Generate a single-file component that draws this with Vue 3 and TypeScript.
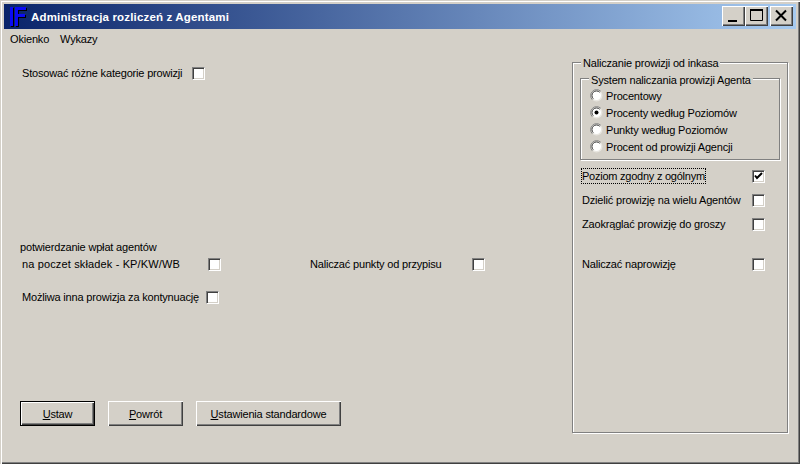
<script setup lang="ts">
const radios = [
  { label: 'Procentowy', on: false },
  { label: 'Procenty według Poziomów', on: true },
  { label: 'Punkty według Poziomów', on: false },
  { label: 'Procent od prowizji Agencji', on: false },
]
</script>

<template>
  <div class="window">
    <header class="titlebar">
      <svg class="logo" width="20" height="24" viewBox="0 0 20 24">
        <path d="M3 2h3v19H3zM8 2h11v3h-8v4h7v3h-7v9H8z" fill="#000" transform="translate(1 1)" />
        <path d="M3 2h3v19H3zM8 2h11v3h-8v4h7v3h-7v9H8z" fill="#0a0af5" />
      </svg>
      <span class="title">Administracja rozliczeń z Agentami</span>
      <div class="controls">
        <button class="ctl"><svg width="23" height="20"><rect x="6" y="14" width="9" height="2" fill="#000" /></svg></button>
        <button class="ctl"><svg width="23" height="20"><path d="M5.500 3.500h12v11h-12z" fill="none" stroke="#000" /><rect x="5" y="3" width="13" height="2" fill="#000" /></svg></button>
        <button class="ctl close"><svg width="23" height="20"><path d="M6 4.500l10 10M16 4.500l-10 10" stroke="#000" stroke-width="2" fill="none" /></svg></button>
      </div>
    </header>
    <nav class="menu"><span>Okienko</span><span>Wykazy</span></nav>
    <main class="content">
      <section class="left">
        <div class="row first"><span>Stosować różne kategorie prowizji</span><i class="check"></i></div>
        <div class="caption">potwierdzanie wpłat agentów</div>
        <div class="row second">
          <span class="w186">na poczet składek - KP/KW/WB</span><i class="check"></i>
          <span class="mid">Naliczać punkty od przypisu</span><i class="check"></i>
        </div>
        <div class="row third"><span>Możliwa inna prowizja za kontynuację</span><i class="check"></i></div>
        <div class="buttons">
          <button class="btn default"><u>U</u>staw</button>
          <button class="btn"><u>P</u>owrót</button>
          <button class="btn wide"><u>U</u>stawienia standardowe</button>
        </div>
      </section>
      <section class="outer group">
        <span class="legend">Naliczanie prowizji od inkasa</span>
        <div class="inner group">
          <span class="legend inner-legend">System naliczania prowizji Agenta</span>
          <div v-for="r in radios" :key="r.label" class="radio-row">
            <svg class="radio" width="13" height="13" viewBox="0 0 13 13">
              <circle cx="6.500" cy="6.500" r="6" fill="#e8e6e0" />
              <circle cx="6.500" cy="6.500" r="4.500" fill="#fff" />
              <path d="M2.260 10.740A6 6 0 0 1 10.740 2.260" fill="none" stroke="#808080" />
              <path d="M3.300 9.700A4.500 4.500 0 0 1 9.700 3.300" fill="none" stroke="#404040" />
              <circle v-if="r.on" cx="6.500" cy="6.500" r="2" fill="#000" />
            </svg>
            <span>{{ r.label }}</span>
          </div>
        </div>
        <div class="side focus-row"><span class="focus">Poziom zgodny z ogólnym</span>
          <i class="check"><svg width="11" height="11"><path d="M2 4.500l2 2.500 5-5" fill="none" stroke="#000" stroke-width="2" /></svg></i></div>
        <div class="side"><span>Dzielić prowizję na wielu Agentów</span><i class="check"></i></div>
        <div class="side"><span>Zaokrąglać prowizję do groszy</span><i class="check"></i></div>
        <div class="side last"><span>Naliczać naprowizję</span><i class="check"></i></div>
      </section>
    </main>
  </div>
</template>

<style scoped>
.window {
  width: 800px;
  height: 464px;
  box-sizing: border-box;
  padding: 4px;
  background: #d4d0c8;
  color: #000;
  font: 11px/14px "Liberation Sans", Arial, sans-serif;
  letter-spacing: -0.18px;
  box-shadow: inset 1px 1px 0 #d4d0c8, inset 2px 2px 0 #fff, inset -1px -1px 0 #404040, inset -2px -2px 0 #808080;
  display: flex;
  flex-direction: column;
}
.titlebar {
  height: 25px;
  flex: none;
  display: flex;
  align-items: center;
  background: linear-gradient(90deg, #0a246a, #a6caf0);
}
.logo { flex: none; margin-right: 4px; margin-left: 3px; }
.title { color: #fff; font-weight: 700; font-size: 11.500px; letter-spacing: 0.16px; }
.controls { margin-left: auto; display: flex; margin-right: 3px; margin-bottom: 1px; }
.ctl {
  width: 23px;
  height: 20px;
  padding: 0;
  border: 0;
  background: #d4d0c8;
  box-shadow: inset 1px 1px 0 #fff, inset -1px -1px 0 #404040, inset -2px -2px 0 #808080;
  display: block;
}
.ctl svg { display: block; }
.close { margin-left: 2px; }
.menu { height: 20px; display: flex; align-items: center; gap: 11px; padding-left: 6px; flex: none; }
.content { flex: 1; display: flex; min-height: 0; }
.left { width: 568px; flex: none; display: flex; flex-direction: column; padding-left: 18px; box-sizing: border-box; }
.row { display: flex; align-items: center; height: 14px; }
.check {
  display: block;
  width: 13px;
  height: 13px;
  flex: none;
  box-sizing: border-box;
  background: #fff;
  border: 1px solid;
  border-color: #808080 #fff #fff #808080;
  box-shadow: inset 1px 1px 0 #404040, inset -1px -1px 0 #d4d0c8;
}
.check svg { display: block; }
.first { margin-top: 17px; }
.first span { margin-right: 10px; }
.caption { margin-top: 160px; margin-left: -2px; }
.second { margin-top: 3px; }
.w186 { width: 186px; letter-spacing: 0.14px; }
.mid { margin-left: 89px; width: 162px; }
.third { margin-top: 19px; }
.third span { margin-right: 7px; }
.buttons { display: flex; gap: 13px; margin-top: 97px; margin-left: -2px; }
.btn {
  width: 75px;
  height: 25px;
  padding: 0;
  border: 0;
  background: #d4d0c8;
  font: inherit;
  letter-spacing: inherit;
  color: #000;
  box-shadow: inset 1px 1px 0 #fff, inset -1px -1px 0 #404040, inset -2px -2px 0 #808080;
}
.btn.default { box-shadow: inset 0 0 0 1px #000, inset 2px 2px 0 #fff, inset -2px -2px 0 #404040, inset -3px -3px 0 #808080; }
.btn.wide { width: 145px; }
.group { position: relative; border: 1px solid #808080; box-shadow: 1px 1px 0 #fff, inset 1px 1px 0 #fff; box-sizing: border-box; }
.outer { width: 216px; height: 371px; margin-top: 13px; padding: 15px 7px 0; }
.legend { position: absolute; left: 8px; top: -7px; padding: 0 2px; background: #d4d0c8; white-space: nowrap; }
.inner { height: 82px; padding: 8px 0 0 9px; }
.inner-legend { left: 8px; top: -6px; }
.radio-row { display: flex; align-items: center; height: 17px; gap: 3px; }
.radio { flex: none; }
.side { display: flex; align-items: center; justify-content: space-between; height: 24px; padding-right: 15px; margin-left: 2px; }
.focus-row { margin-top: 4px; }
.focus { outline: 1px dotted #000; letter-spacing: -0.24px; }
.last { margin-top: 16px; }
</style>
